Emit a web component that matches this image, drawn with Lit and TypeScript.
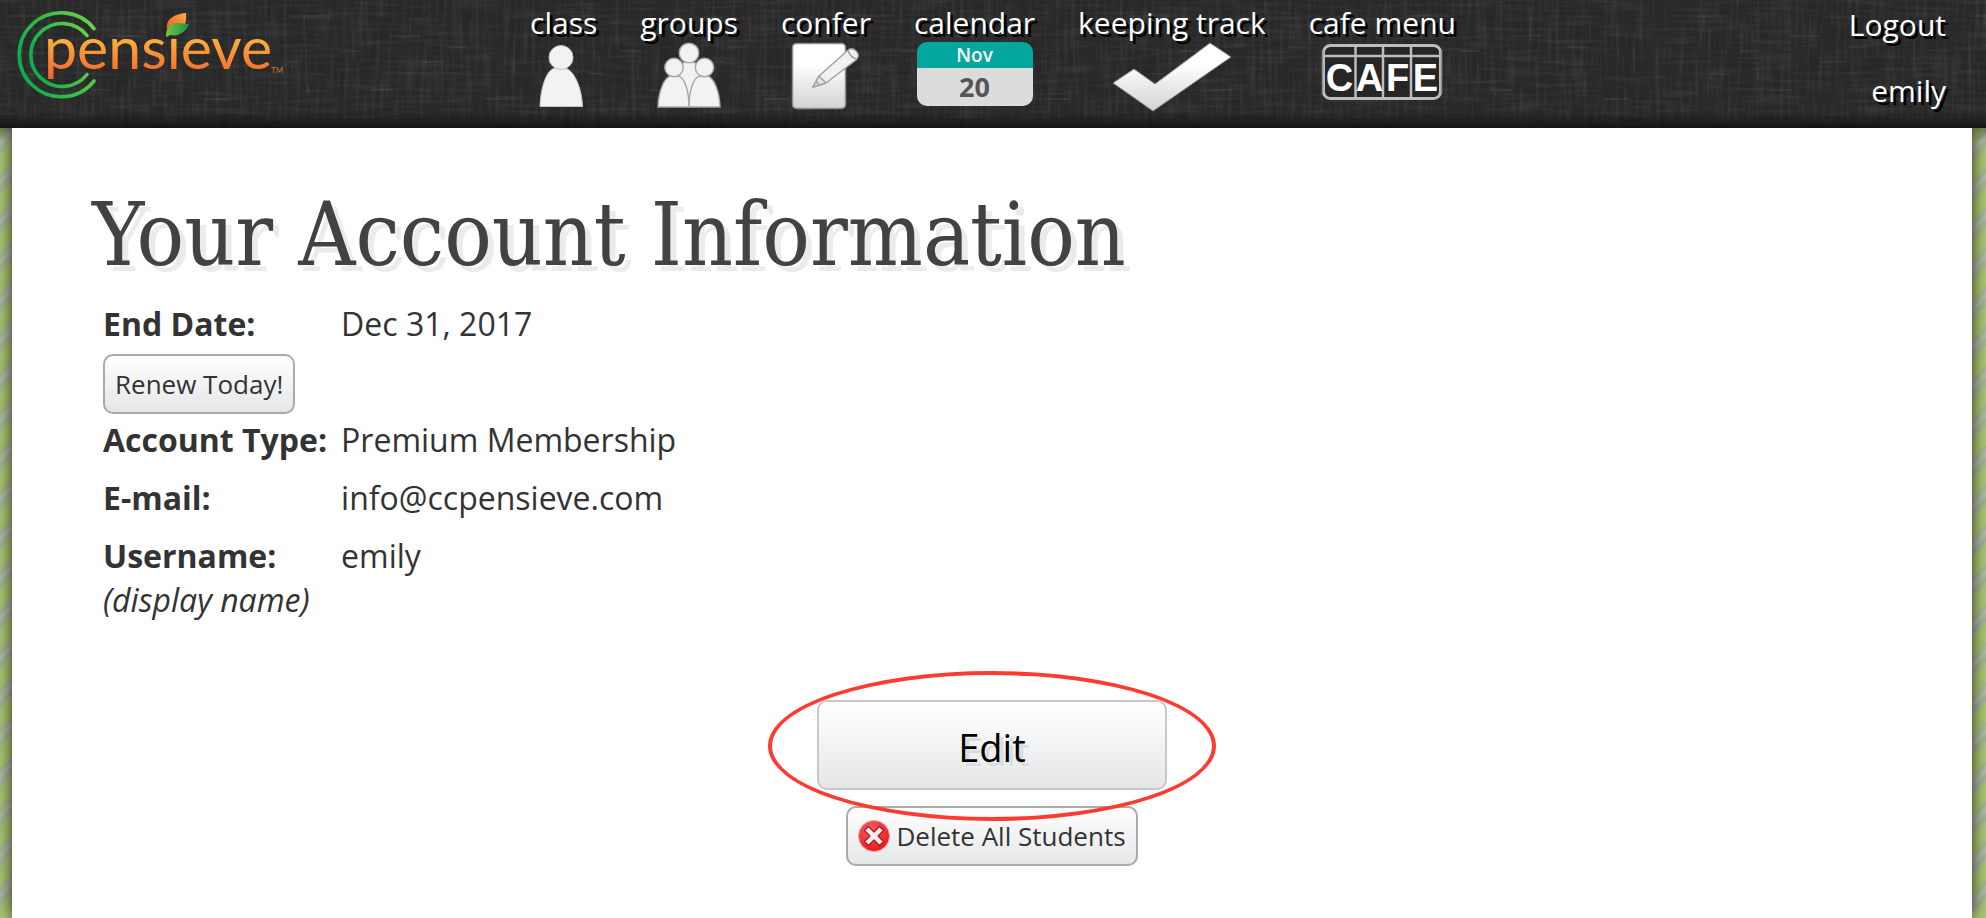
import { LitElement, html, svg, css } from "lit";

const texture = svg`
  <svg class="texture" aria-hidden="true" preserveAspectRatio="none">
    <filter id="warp" x="0" y="0" width="100%" height="100%">
      <feTurbulence type="fractalNoise" baseFrequency="0.02 0.25" numOctaves="3" seed="4" />
      <feColorMatrix values="0 0 0 0 1  0 0 0 0 1  0 0 0 0 1  1.2 0 0 0 -0.52" />
    </filter>
    <filter id="weft" x="0" y="0" width="100%" height="100%">
      <feTurbulence type="fractalNoise" baseFrequency="0.25 0.02" numOctaves="3" seed="9" />
      <feColorMatrix values="0 0 0 0 1  0 0 0 0 1  0 0 0 0 1  1.2 0 0 0 -0.52" />
    </filter>
    <pattern id="threads" width="280" height="128" patternUnits="userSpaceOnUse">
      <path
        d="M60 51h20M168 47h18M90 90h22M205 99h24M10 16h40M228 123h18M140 62h24M30 74h14M110 36h30"
        stroke="#fff" stroke-opacity=".09" fill="none"
      />
      <path d="M130 18v18M24 12v16M145 2v10M78 62v18M28 82v12M234 40v34M190 20v22" stroke="#fff" stroke-opacity=".07" fill="none" />
    </pattern>
    <rect width="100%" height="100%" filter="url(#warp)" opacity=".1" />
    <rect width="100%" height="100%" filter="url(#weft)" opacity=".12" />
    <rect width="100%" height="100%" fill="url(#threads)" />
  </svg>`;

const logo = html`
  <svg class="logo" viewBox="0 0 290 110" role="img" aria-label="pensieve">
    <defs>
      <linearGradient id="green" x1="0" x2="1" y1="0.4" y2="0">
        <stop offset="0" stop-color="#0fae4b" />
        <stop offset="1" stop-color="#6fd447" />
      </linearGradient>
      <linearGradient id="orange" x1="0" x2="0" y1="1" y2="0">
        <stop offset="0" stop-color="#f4592a" />
        <stop offset="0.6" stop-color="#fbb03b" />
      </linearGradient>
      <linearGradient id="leafA" x1="0" x2="1" y1="1" y2="0">
        <stop offset="0.1" stop-color="#ee5a2a" />
        <stop offset="1" stop-color="#fbb03b" />
      </linearGradient>
      <linearGradient id="leafB" x1="0" x2="1">
        <stop offset="0" stop-color="#7cc142" />
        <stop offset="1" stop-color="#149247" />
      </linearGradient>
    </defs>
    <g fill="none" stroke="url(#green)" stroke-width="3.6" stroke-linecap="round">
      <path d="M94 28.5A42 42 0 1 0 94 81" />
      <path d="M87 35.5A31.5 31.5 0 1 0 87 74.5" />
    </g>
    <text class="wordmark" x="44" y="69" fill="url(#orange)">pensieve</text>
    <path d="M167 29C165 19 175 14 186 13c1 10-2 18-12 21z" fill="url(#leafA)" />
    <path d="M166 36c0-8 4-12 10-13 6 0 9 1 13 1-3 8-10 13-19 11l-3 2z" fill="url(#leafB)" />
    <text class="trademark" x="271" y="73">TM</text>
  </svg>`;

const soft = svg`
  <linearGradient id="soft" x1="0" x2="0" y1="0" y2="1">
    <stop offset="0.3" stop-color="#fff" />
    <stop offset="1" stop-color="#d2d3d5" />
  </linearGradient>`;

const classIcon = html`
  <svg width="50" height="66" viewBox="0 0 50 66" aria-hidden="true">
    <g fill="#f2f2f2" stroke="#c4c4c4" stroke-width="1">
      <path d="M1 64.500C1.500 47 7 26.500 17 26h8c10 .5 18 21 18.500 38.500z" />
      <circle cx="22" cy="15.500" r="12" />
    </g>
  </svg>`;

const groupsIcon = html`
  <svg width="64" height="66" viewBox="0 0 64 66" aria-hidden="true">
    <g fill="#f2f2f2" stroke="#a9a9a9" stroke-width="1.4">
      <path d="M14 60C16 38 22 21 28 20h8c6 1 12 18 14 40z" />
      <circle cx="32" cy="11" r="9.800" />
      <path d="M1 65C1.500 50 7 35 14 34h7c7 1 11 16 11 31z" />
      <path d="M32 65c0-15 4-30 11-31h7c7 1 12.500 16 13 31z" />
      <circle cx="17" cy="25.500" r="9.200" />
      <circle cx="47.500" cy="25.500" r="9.200" />
    </g>
  </svg>`;

const conferIcon = html`
  <svg width="70" height="68" viewBox="0 0 70 68" aria-hidden="true">
    <defs>${soft}</defs>
    <rect x="1.500" y="1.500" width="53" height="65" rx="4" fill="url(#soft)" stroke="#8d8d8d" stroke-width="1.500" />
    <g fill="#f1f1f1" stroke="#a2a2a2" stroke-width="1.500" stroke-linejoin="round">
      <path d="M28 34L56 9c3-3 6-3 9 0 3 3 3 6 0 9L35 41l-13 4z" />
      <path d="M28 34l7 7-13 4z" fill="#e4e4e4" />
      <path d="M57 8c1 4 4 8 9 9" fill="none" />
      <path d="M25 39l3 4" />
    </g>
  </svg>`;

const checkIcon = html`
  <svg width="120" height="70" viewBox="0 0 120 70" aria-hidden="true">
    <defs>${soft}</defs>
    <path d="M1 41L22 27 43 42 98 1l21 14L41 69z" fill="url(#soft)" stroke="#8d8d8d" stroke-width="1" />
  </svg>`;

const cafeIcon = html`
  <svg width="122" height="60" viewBox="0 0 122 60" aria-hidden="true">
    <rect x="2.500" y="3.500" width="117" height="53" rx="7" fill="#262626" stroke="#bdbdbd" stroke-width="3" />
    <path d="M3 14h116M34.500 4v52M62 4v52M90 4v52" stroke="#bdbdbd" stroke-width="2.500" fill="none" />
    <path d="M1.500 8v44M120.500 8v44" stroke="#8f8f8f" stroke-width="1.500" />
    <g class="cafe">
      <text x="18.500" y="49">C</text>
      <text x="48.500" y="49">A</text>
      <text x="76.500" y="49">F</text>
      <text x="104.500" y="49">E</text>
    </g>
  </svg>`;

const calendarIcon = html`
  <span class="day"><span class="month">Nov</span><span class="date">20</span></span>`;

const deleteIcon = html`
  <svg width="32" height="32" viewBox="0 0 32 32" aria-hidden="true">
    <defs>
      <radialGradient id="red" cx="0.4" cy="0.3" r="0.75">
        <stop offset="0" stop-color="#f06262" />
        <stop offset="1" stop-color="#e8141c" />
      </radialGradient>
    </defs>
    <circle cx="16" cy="16" r="15.500" fill="url(#red)" stroke="#f4a5a5" />
    <path
      d="M10.500 6.500L16 12l5.500-5.500 4 4L20 16l5.500 5.500-4 4L16 20l-5.500 5.500-4-4L12 16l-5.500-5.500z"
      fill="#fdeeee" stroke="#b5121b" stroke-width="1.200" stroke-linejoin="round"
    />
  </svg>`;

const NAV = [
  { label: "class", icon: classIcon },
  { label: "groups", icon: groupsIcon },
  { label: "confer", icon: conferIcon },
  { label: "calendar", icon: calendarIcon },
  { label: "keeping track", icon: checkIcon },
  { label: "cafe menu", icon: cafeIcon },
];

class SiteHeader extends LitElement {
  static styles = css`
    :host {
      display: grid;
      grid-template-columns: 1fr auto 1fr;
      position: relative;
      height: 128px;
      background: #282828;
      color: #fff;
      font-size: 30px;
      line-height: 39px;
    }
    .texture {
      position: absolute;
      inset: 0;
      width: 100%;
      height: 100%;
    }
    :host::after {
      content: "";
      position: absolute;
      inset: auto 0 0;
      height: 16px;
      background: linear-gradient(transparent, #141414);
    }
    .home,
    nav,
    .account {
      position: relative;
      z-index: 1;
    }
    a {
      color: inherit;
      text-decoration: none;
      text-shadow: 3px 3px 0 #000;
    }
    .home {
      justify-self: start;
      text-shadow: none;
    }
    .logo {
      display: block;
      width: 290px;
      height: 110px;
    }
    .wordmark {
      font: 400 59px Lato, sans-serif;
    }
    .trademark {
      font: 400 8px Lato, sans-serif;
      fill: #c77a2c;
    }
    nav {
      display: flex;
      gap: 43px;
      padding-top: 3px;
    }
    nav a {
      display: flex;
      flex-direction: column;
      align-items: center;
    }
    svg {
      flex: none;
    }
    .cafe {
      font: 700 38px "Liberation Sans Narrow", "Liberation Sans", sans-serif;
      fill: #fff;
      text-anchor: middle;
      text-shadow: none;
    }
    .day {
      display: flex;
      flex-direction: column;
      width: 116px;
      border-radius: 10px;
      overflow: hidden;
      text-align: center;
      text-shadow: none;
    }
    .month {
      background: #04a79e;
      font-size: 19px;
      font-weight: 600;
      line-height: 26px;
    }
    .date {
      background: #dcdcdc;
      color: #555;
      font-size: 27px;
      font-weight: 700;
      line-height: 38px;
    }
    .account {
      display: flex;
      flex-direction: column;
      align-items: flex-end;
      gap: 27px;
      padding: 5px 40px 0 0;
    }
  `;

  render() {
    return html`
      ${texture}
      <a class="home" href="#">${logo}</a>
      <nav>${NAV.map((n) => html`<a href="#">${n.label}${n.icon}</a>`)}</nav>
      <div class="account"><a href="#">Logout</a><a href="#">emily</a></div>
    `;
  }
}
customElements.define("site-header", SiteHeader);

class AppRoot extends LitElement {
  static styles = css`
    :host {
      display: flex;
      flex-direction: column;
      min-height: 100vh;
      font-family: "Open Sans", sans-serif;
      color: #333;
    }
    .backdrop {
      flex: 1;
      display: flex;
      padding: 0 14px 0 12px;
      overflow: hidden;
      background:
        linear-gradient(rgba(0, 0, 0, 0.35), transparent 14px),
        repeating-linear-gradient(-45deg, #abc873 0 11px, #a7b795 14px 17px, #b3c1a8 20px, #a7b795 25px, #abc873 28px);
    }
    main {
      flex: 1;
      padding: 47px 80px;
      background: #fff;
      box-shadow: 0 0 16px rgba(0, 0, 0, 0.8);
    }
    h1 {
      margin: 0;
      font: 400 88px/120px "DejaVu Serif Condensed", "DejaVu Serif", serif;
      color: #424242;
      text-shadow: 6px 6px 0 #ebebeb;
    }
    dl {
      display: grid;
      grid-template-columns: auto 1fr;
      column-gap: 14px;
      margin: 0 11px;
      font-size: 32px;
      line-height: 44px;
    }
    dt,
    dd {
      margin: 0;
      padding: 7px 0;
    }
    dt {
      font-weight: 700;
    }
    dt em {
      display: block;
      font-weight: 400;
    }
    .renew {
      grid-column: 1 / -1;
      height: 57px;
      padding: 1px 0 0;
    }
    button {
      display: inline-flex;
      align-items: center;
      justify-content: center;
      gap: 6px;
      height: 60px;
      padding: 0 10px;
      border: 2px solid #aaa;
      border-radius: 10px;
      background: linear-gradient(#fff, #e5e6e8);
      color: #333;
      font: 26px "Open Sans", sans-serif;
    }
    .actions {
      position: relative;
      display: flex;
      flex-direction: column;
      align-items: center;
      gap: 16px;
      margin-top: 71px;
    }
    .edit {
      width: 350px;
      height: 90px;
      padding-top: 4px;
      border-color: #c8c8c8;
      color: #000;
      font-size: 38px;
      text-shadow: 4px 4px 0 #dcdcdc;
    }
    .highlight {
      position: absolute;
      top: -29px;
      left: 50%;
      width: 448px;
      height: 150px;
      margin-left: -224px;
      box-sizing: border-box;
      border: 4px solid #ff3b30;
      border-radius: 50%;
      pointer-events: none;
    }
  `;

  render() {
    return html`
      <site-header></site-header>
      <div class="backdrop">
        <main>
          <h1>Your Account Information</h1>
          <dl>
            <dt>End Date:</dt>
            <dd>Dec 31, 2017</dd>
            <dd class="renew"><button type="button">Renew Today!</button></dd>
            <dt>Account Type:</dt>
            <dd>Premium Membership</dd>
            <dt>E-mail:</dt>
            <dd>info@ccpensieve.com</dd>
            <dt>Username: <em>(display name)</em></dt>
            <dd>emily</dd>
          </dl>
          <div class="actions">
            <button class="edit" type="button">Edit</button>
            <button type="button">${deleteIcon}Delete All Students</button>
            <div class="highlight"></div>
          </div>
        </main>
      </div>
    `;
  }
}
customElements.define("app-root", AppRoot);
